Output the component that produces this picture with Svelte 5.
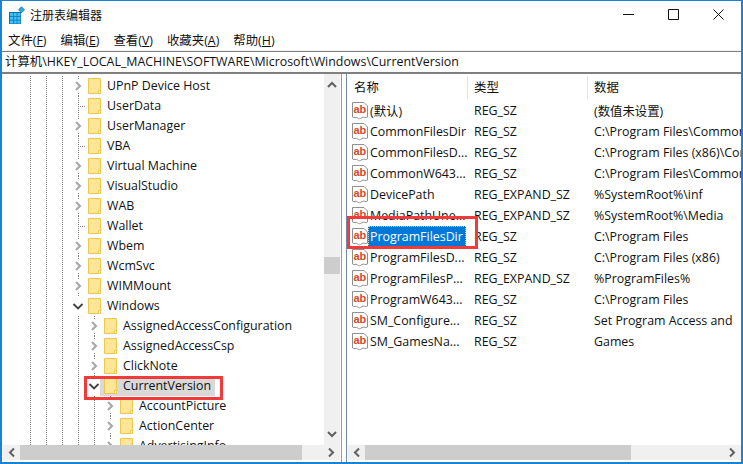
<script>
    // 树形节点：depth 为缩进层数，kind: c 折叠 / o 展开 / l 叶子
    const tree = [
        { name: "UPnP Device Host", depth: 3, kind: "c" },
        { name: "UserData", depth: 3, kind: "l" },
        { name: "UserManager", depth: 3, kind: "c" },
        { name: "VBA", depth: 3, kind: "l" },
        { name: "Virtual Machine", depth: 3, kind: "c" },
        { name: "VisualStudio", depth: 3, kind: "c" },
        { name: "WAB", depth: 3, kind: "c" },
        { name: "Wallet", depth: 3, kind: "l" },
        { name: "Wbem", depth: 3, kind: "c" },
        { name: "WcmSvc", depth: 3, kind: "c" },
        { name: "WIMMount", depth: 3, kind: "c" },
        { name: "Windows", depth: 3, kind: "o" },
        { name: "AssignedAccessConfiguration", depth: 4, kind: "c" },
        { name: "AssignedAccessCsp", depth: 4, kind: "c" },
        { name: "ClickNote", depth: 4, kind: "c" },
        { name: "CurrentVersion", depth: 4, kind: "o", selected: true },
        { name: "AccountPicture", depth: 5, kind: "c" },
        { name: "ActionCenter", depth: 5, kind: "c" },
        { name: "AdvertisingInfo", depth: 5, kind: "c" },
    ];

    const values = [
        ["(默认)", "REG_SZ", "(数值未设置)"],
        ["CommonFilesDir", "REG_SZ", "C:\\Program Files\\Common Files"],
        ["CommonFilesD...", "REG_SZ", "C:\\Program Files (x86)\\Common Files"],
        ["CommonW643...", "REG_SZ", "C:\\Program Files\\Common Files"],
        ["DevicePath", "REG_EXPAND_SZ", "%SystemRoot%\\inf"],
        ["MediaPathUne...", "REG_EXPAND_SZ", "%SystemRoot%\\Media"],
        ["ProgramFilesDir", "REG_SZ", "C:\\Program Files"],
        ["ProgramFilesD...", "REG_SZ", "C:\\Program Files (x86)"],
        ["ProgramFilesP...", "REG_EXPAND_SZ", "%ProgramFiles%"],
        ["ProgramW643...", "REG_SZ", "C:\\Program Files"],
        ["SM_Configure...", "REG_SZ", "Set Program Access and"],
        ["SM_GamesNa...", "REG_SZ", "Games"],
    ];
</script>

<main class="win">
    <header class="title">
        <svg class="logo" width="16" height="18" viewBox="0 0 16 18">
            <path d="M0 6h12v12H0z" fill="#0b6fb8" />
            <path d="M1 7h3v3H1zM4.700 7h3v3h-3zM8.400 7h3v3h-3zM1 10.700h3v3H1zM4.700 10.700h3v3h-3zM8.400 10.700h3v3h-3zM1 14.400h3v3H1zM4.700 14.400h3v3h-3zM8.400 14.400h3v3h-3z" fill="#3fc1f5" />
            <path d="M12.500 .8l3 3-3 3-3-3z" fill="#3aa6e0" stroke="#0b6fb8" stroke-width=".8" />
        </svg>
        <span class="title-text">注册表编辑器</span>
        <div class="controls">
            <svg width="11" height="11" viewBox="0 0 11 11"><path d="M0 5.500h11" stroke="#111" fill="none" /></svg>
            <svg width="11" height="11" viewBox="0 0 11 11"><path d="M.5 .5h10v10H.5z" stroke="#111" fill="none" /></svg>
            <svg width="11" height="11" viewBox="0 0 11 11"><path d="M.5 .5l10 10M10.500 .5l-10 10" stroke="#111" fill="none" /></svg>
        </div>
    </header>

    <nav class="menu">
        <span>文件(<u>F</u>)</span>
        <span>编辑(<u>E</u>)</span>
        <span>查看(<u>V</u>)</span>
        <span>收藏夹(<u>A</u>)</span>
        <span>帮助(<u>H</u>)</span>
    </nav>

    <div class="address">计算机\HKEY_LOCAL_MACHINE\SOFTWARE\Microsoft\Windows\CurrentVersion</div>

    <div class="panes">
        <section class="tree-pane">
            <div class="tree-top">
                <div class="tree-rows">
                    {#each tree as node}
                        <div class="row">
                            {#each Array(node.depth) as _}
                                <span class="ind"></span>
                            {/each}
                            {#if node.kind === "l"}
                                <span class="exp leaf"></span>
                            {:else}
                                <span class="exp" class:stub={node.kind === "c"}>
                                    <svg width="12" height="12" viewBox="0 0 12 12">
                                        {#if node.kind === "c"}
                                            <path d="M4 2l4 4-4 4" fill="none" stroke="#a6a6a6" stroke-width="2" />
                                        {:else}
                                            <path d="M1.500 4l4.500 4.500L10.500 4" fill="none" stroke="#404040" stroke-width="1.800" />
                                        {/if}
                                    </svg>
                                </span>
                            {/if}
                            <span class="item" class:sel={node.selected}>
                                <svg class="folder" width="14" height="16" viewBox="0 0 14 16">
                                    <path d="M.5 .5h12v15H.5z" fill="#ffe596" stroke="#ecc84e" />
                                    <path d="M10.500 15.500v-3h2v3z" fill="#fff" stroke="#ecc84e" />
                                </svg>
                                <span class="label">{node.name}</span>
                            </span>
                        </div>
                    {/each}
                </div>
                <div class="vbar">
                    <svg class="arrow" width="16" height="8" viewBox="0 0 16 8"><path d="M4 6l4-4 4 4" fill="none" stroke="#606060" stroke-width="2" /></svg>
                    <div class="vtrack"><div class="vthumb"></div></div>
                    <svg class="arrow" width="16" height="8" viewBox="0 0 16 8"><path d="M4 2l4 4 4-4" fill="none" stroke="#606060" stroke-width="2" /></svg>
                </div>
            </div>
            <div class="hbar">
                <svg class="harrow" width="17" height="15" viewBox="0 0 17 15"><path d="M11 3.500l-4 4 4 4" fill="none" stroke="#606060" stroke-width="2" /></svg>
                <div class="hthumb tree-thumb"></div>
                <span class="hspace"></span>
                <svg class="harrow" width="17" height="15" viewBox="0 0 17 15"><path d="M6 3.500l4 4-4 4" fill="none" stroke="#606060" stroke-width="2" /></svg>
            </div>
        </section>

        <section class="list-pane">
            <div class="list-head">
                <span class="col c1">名称</span>
                <span class="col c2">类型</span>
                <span class="col c3">数据</span>
            </div>
            <div class="list-rows">
                {#each values as v, i}
                    <div class="lrow">
                        <svg class="ab" width="16" height="18" viewBox="0 0 16 18">
                            <path d="M.5 .5h11.500l3.500 3.500v11c-2 1.500-3.500-.8-5.500 .6s-3 1.500-4.500 .2-3.500 .6-5-.8z" fill="#fff" stroke="#8f8f8f" />
                            <text x="1.500" y="11" class="ab-text">ab</text>
                        </svg>
                        <span class="lname"><span class="ltext" class:active={i === 6}>{v[0]}</span></span>
                        <span class="ltype">{v[1]}</span>
                        <span class="ldata">{v[2]}</span>
                    </div>
                {/each}
            </div>
            <div class="hbar">
                <svg class="harrow" width="17" height="15" viewBox="0 0 17 15"><path d="M11 3.500l-4 4 4 4" fill="none" stroke="#606060" stroke-width="2" /></svg>
                <div class="hthumb list-thumb"></div>
                <span class="hspace"></span>
                <svg class="harrow" width="17" height="15" viewBox="0 0 17 15"><path d="M6 3.500l4 4-4 4" fill="none" stroke="#606060" stroke-width="2" /></svg>
            </div>
        </section>
    </div>

    <!-- 红框标注 -->
    <div class="mark mark-tree"></div>
    <div class="mark mark-list"></div>
</main>

<style>
    :global(body) {
        margin: 0;
        background: #fff;
    }

    .win {
        position: relative;
        box-sizing: border-box;
        width: 743px;
        height: 464px;
        overflow: hidden;
        display: flex;
        flex-direction: column;
        background: #fff;
        border: 1px solid #1a83d4;
        border-width: 1px 2px 2px 2px;
        font-family: "Open Sans", "Noto Sans CJK SC", sans-serif;
        font-size: 12.4px;
        color: #111;
    }

    .title {
        box-sizing: border-box;
        height: 29px;
        padding-bottom: 2px;
        display: flex;
        align-items: center;
        flex: none;
    }
    .logo {
        margin-left: 7px;
    }
    .title-text {
        margin-left: 5px;
        font-size: 12px;
    }
    .controls {
        margin-left: auto;
        display: flex;
        gap: 34px;
        margin-right: 17px;
    }

    .menu {
        box-sizing: border-box;
        height: 21px;
        flex: none;
        display: flex;
        align-items: center;
        padding-left: 6px;
        gap: 14px;
        border-bottom: 1px solid #f0f0f0;
    }

    .address {
        height: 20px;
        line-height: 20px;
        flex: none;
        padding-left: 3px;
        border-top: 1px solid #808080;
        border-bottom: 2px solid #808080;
        background: #fff;
        white-space: nowrap;
    }

    .panes {
        flex: 1;
        display: flex;
        min-height: 0;
    }

    .tree-pane {
        width: 338px;
        flex: none;
        display: flex;
        flex-direction: column;
        padding-right: 1px;
        border-right: 1px solid #9a9a9a;
    }
    .tree-top {
        flex: 1;
        min-height: 0;
        display: flex;
    }
    .tree-rows {
        flex: 1;
        overflow: hidden;
        padding-top: 2px;
    }
    .row {
        height: 20px;
        display: flex;
        align-items: center;
        padding-left: 20px;
        white-space: nowrap;
    }
    .ind {
        width: 16px;
        height: 20px;
        flex: none;
        background: repeating-linear-gradient(to bottom, #808080 0 1px, transparent 1px 2px) 8px 0 / 1px 100% no-repeat;
    }
    .exp {
        width: 16px;
        height: 20px;
        flex: none;
        display: flex;
        align-items: center;
        justify-content: center;
    }
    .stub {
        background:
            repeating-linear-gradient(to bottom, #808080 0 1px, transparent 1px 2px) 8px 0 / 1px 4px no-repeat,
            repeating-linear-gradient(to bottom, #808080 0 1px, transparent 1px 2px) 8px 17px / 1px 3px no-repeat;
    }
    .leaf {
        background:
            repeating-linear-gradient(to bottom, #808080 0 1px, transparent 1px 2px) 8px 0 / 1px 100% no-repeat,
            repeating-linear-gradient(to right, #808080 0 1px, transparent 1px 2px) 8px 10px / 8px 1px no-repeat;
    }
    .item {
        display: flex;
        align-items: center;
        height: 20px;
        margin-left: -2px;
        padding-left: 4px;
        padding-right: 4px;
    }
    .item.sel {
        background: #d9d9d9;
    }
    .folder {
        flex: none;
    }
    .label {
        margin-left: 5px;
        line-height: 20px;
    }

    .vbar {
        width: 16px;
        flex: none;
        background: #f0f0f0;
        display: flex;
        flex-direction: column;
    }
    .arrow {
        flex: none;
        margin: 7px 0;
    }
    .vtrack {
        flex: 1;
        padding-top: 161px;
    }
    .vthumb {
        height: 17px;
        background: #cdcdcd;
    }

    .hbar {
        height: 15px;
        flex: none;
        margin: 0 0 2px 1px;
        display: flex;
        background: #f0f0f0;
    }
    .harrow {
        flex: none;
    }
    .hthumb {
        height: 15px;
        background: #cdcdcd;
        flex: none;
    }
    .hspace {
        flex: 1;
    }
    .tree-thumb {
        width: 282px;
    }
    .list-thumb {
        width: 266px;
    }

    .list-pane {
        flex: 1;
        min-width: 0;
        margin-left: 4px;
        border-left: 1px solid #6f8ba8;
        display: flex;
        flex-direction: column;
    }
    .list-head {
        box-sizing: border-box;
        height: 25px;
        padding-top: 2px;
        display: flex;
        flex: none;
    }
    .col {
        box-sizing: border-box;
        padding-left: 6px;
        line-height: 23px;
        border-right: 1px solid #e5e5e5;
        flex: none;
    }
    .c1 {
        width: 121px;
        padding-left: 7px;
    }
    .c2 {
        width: 120px;
    }
    .c3 {
        border-right: 0;
    }
    .list-rows {
        flex: 1;
        overflow: hidden;
        padding-top: 1px;
    }
    .lrow {
        height: 21px;
        display: flex;
        align-items: center;
        white-space: nowrap;
    }
    .ab {
        margin-left: 5px;
        flex: none;
    }
    .ab-text {
        font-family: "Liberation Sans", sans-serif;
        font-size: 11px;
        font-weight: bold;
        fill: #d4492a;
    }
    .lname {
        width: 106px;
        flex: none;
    }
    .ltext {
        padding: 2px 3px 2px 2px;
    }
    .ltext.active {
        background: #0078d7;
        color: #fff;
        outline: 1px dotted #ffc68a;
        outline-offset: -1px;
    }
    .ltype {
        width: 120px;
        flex: none;
    }
    .ldata {
        overflow: hidden;
    }

    .mark {
        position: absolute;
        box-sizing: border-box;
        border: 3px solid #f33a3a;
        pointer-events: none;
    }
    .mark-tree {
        left: 82px;
        top: 375px;
        width: 139px;
        height: 24px;
    }
    .mark-list {
        left: 345px;
        top: 215px;
        width: 131px;
        height: 33px;
    }
</style>
